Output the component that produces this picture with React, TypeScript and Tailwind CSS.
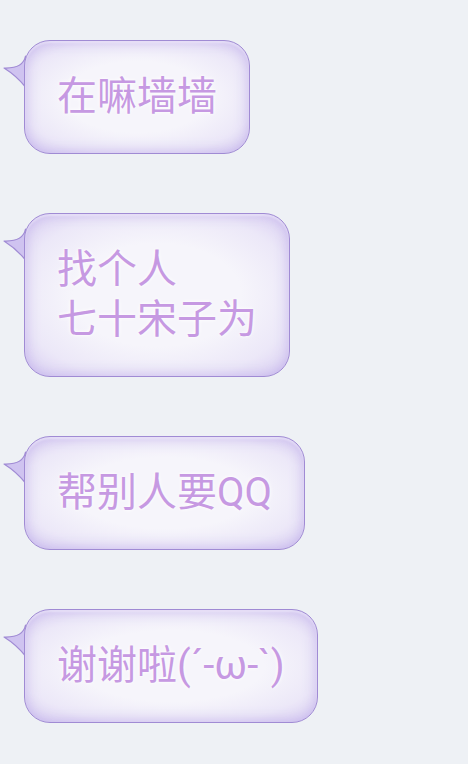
import React from "react";

const messages: string[][] = [
  ["在嘛墙墙"],
  ["找个人", "七十宋子为"],
  ["帮别人要QQ"],
  ["谢谢啦(´-ω-`)"],
];

function Tail() {
  return (
    <svg
      className="absolute left-[-22px] top-[12px]"
      width="26"
      height="38"
      viewBox="0 0 26 38"
    >
      <path
        d="M23.5 4 C22 12 15 16.5 2 16 C10 21 17 27 23.5 35 Z"
        fill="#cfc3f0"
        stroke="#a08bd4"
        strokeWidth="1.2"
        strokeLinejoin="round"
      />
    </svg>
  );
}

function Bubble({ lines }: { lines: string[] }) {
  return (
    <div className="relative ml-[24px] self-start">
      <Tail />
      <div className="relative rounded-[26px] border border-[#a08bd4] bg-[radial-gradient(ellipse_at_center,#f6f5fb_45%,#ece8f8_75%,#d9cff2_100%)] px-[32px] py-[31px] shadow-[inset_0_0_14px_rgba(185,165,232,0.75),inset_0_2px_2px_rgba(255,255,255,0.9)]">
        {lines.map((line, i) => (
          <div
            key={i}
            className="whitespace-nowrap text-[40px] leading-[50px] text-[#c699e2] [text-shadow:0_0_4px_#ffffff,0_0_2px_#ffffff]"
          >
            {line}
          </div>
        ))}
      </div>
    </div>
  );
}

export default function App() {
  return (
    <div
      className="flex min-h-[764px] w-full flex-col gap-[59px] bg-[#eef1f5] pt-[40px]"
      style={{ fontFamily: 'Roboto, "Noto Sans CJK SC", sans-serif' }}
    >
      {messages.map((m, i) => (
        <Bubble key={i} lines={m} />
      ))}
    </div>
  );
}
